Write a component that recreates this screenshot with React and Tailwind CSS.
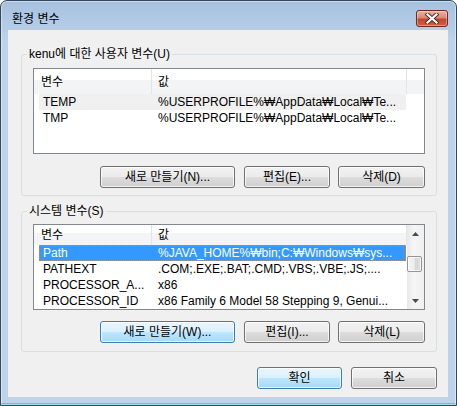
import React from "react";

const userVars = [
  { name: "TEMP", value: "%USERPROFILE%₩AppData₩Local₩Te...", hover: true },
  { name: "TMP", value: "%USERPROFILE%₩AppData₩Local₩Te..." },
];

const systemVars = [
  { name: "Path", value: "%JAVA_HOME%₩bin;C:₩Windows₩sys...", selected: true },
  { name: "PATHEXT", value: ".COM;.EXE;.BAT;.CMD;.VBS;.VBE;.JS;...." },
  { name: "PROCESSOR_A...", value: "x86" },
  { name: "PROCESSOR_ID", value: "x86 Family 6 Model 58 Stepping 9, Genui..." },
];

const Button = ({ children, width, blue }) => (
  <button
    className={
      "h-[22px] rounded-[3px] border text-[12px] leading-[14px] text-black shadow-[inset_0_0_0_1px_rgba(255,255,255,0.75)] " +
      width +
      (blue
        ? " border-[#3c7fb1] bg-[linear-gradient(#eaf6fd_0%,#d9f0fc_50%,#bee6fd_50%,#a7d9f5_100%)]"
        : " border-[#707070] bg-[linear-gradient(#f2f2f2_0%,#ebebeb_50%,#dddddd_50%,#cfcfcf_100%)]")
    }
  >
    {children}
  </button>
);

const Header = ({ full }) => (
  <div className="flex h-[25px] items-stretch bg-[linear-gradient(#ffffff_0%,#ffffff_42%,#f3f4f5_42%,#f3f4f5_100%)]">
    <div className="flex w-[117px] items-center pl-[7px]">변수</div>
    <div className="w-px bg-[#e3e4e6]" />
    <div className="flex w-[254px] items-center pl-[6px]">값</div>
    <div className="w-px bg-[#e3e4e6]" />
    {full && <div className="w-[17px]" />}
  </div>
);

const Row = ({ row }) => (
  <div
    className={
      "ml-[5px] flex h-[16px] w-[367px] shrink-0 items-center whitespace-nowrap leading-[16px] " +
      (row.selected
        ? "bg-[#3399ff] text-white outline outline-1 -outline-offset-1 outline-dotted outline-[#d98b3c]"
        : row.hover
        ? "bg-[#f0f0f0]"
        : "")
    }
  >
    <div className="w-[112px] overflow-hidden pl-[4px]">{row.name}</div>
    <div className="w-[255px] overflow-hidden pl-[7px]">{row.value}</div>
  </div>
);

const Scrollbar = () => (
  <div className="flex w-[17px] flex-col bg-[linear-gradient(90deg,#e8e8e8,#f5f5f5_40%,#f0f0f0)]">
    <div className="flex h-[17px] items-center justify-center">
      <svg width="7" height="4" viewBox="0 0 7 4">
        <path d="M3.5 0 L7 4 L0 4 Z" fill="#4a4a4a" />
      </svg>
    </div>
    <div className="flex-1 pt-[14px]">
      <div className="h-[16px] w-[15px] rounded-[2px] border border-[#959595] bg-[linear-gradient(90deg,#f6f6f6_0%,#ebebeb_50%,#d6d6d6_50%,#dedede_100%)] shadow-[inset_0_0_0_1px_rgba(255,255,255,0.7)]" />
    </div>
    <div className="flex h-[17px] items-center justify-center">
      <svg width="7" height="4" viewBox="0 0 7 4">
        <path d="M0 0 L7 0 L3.5 4 Z" fill="#4a4a4a" />
      </svg>
    </div>
  </div>
);

const Group = ({ title, rows, scroll, buttons, className, inner, gap }) => (
  <fieldset className={"w-[416px] rounded-[3px] border border-[#d5dfe5] " + className}>
    <legend className="ml-[5px] px-[2px] leading-[14px]">{title}</legend>
    <div className={"px-[11px] " + inner}>
      <div className="flex h-[86px] w-[392px] overflow-hidden border border-[#828790] bg-white">
        <div className="flex w-[373px] flex-col">
          {scroll ? (
            <Header />
          ) : (
            <div className="w-[390px]">
              <Header full />
            </div>
          )}
          {rows.map((r) => (
            <Row key={r.name} row={r} />
          ))}
        </div>
        {scroll && <Scrollbar />}
      </div>
      <div className={"flex justify-end " + gap}>
        <Button width="w-[135px]" blue={buttons[3]}>
          {buttons[0]}
        </Button>
        <div className="w-[9px]" />
        <Button width="w-[86px]">{buttons[1]}</Button>
        <div className="w-[8px]" />
        <Button width="w-[87px]">{buttons[2]}</Button>
      </div>
    </div>
  </fieldset>
);

export default function App() {
  return (
    <div className="h-[406px] w-[457px] overflow-hidden rounded-t-[7px] border border-[#34465a] bg-[linear-gradient(#a6c0dd_0px,#b6cde7_28px,#bcd3eb_40px,#bcd3eb_100%)] font-['Liberation_Sans','Noto_Sans_CJK_KR',sans-serif] text-[12px] text-black shadow-[inset_0_0_0_1px_rgba(255,255,255,0.45),inset_0_-2px_0_#5fc4e0]">
      <div className="flex h-[29px] items-start justify-between">
        <div className="pl-[11px] pt-[11px] leading-[14px]">환경 변수</div>
        <div className="mr-[8px] mt-[9px] flex h-[17px] w-[32px] items-center justify-center rounded-[3px] border border-[#6d2a22] bg-[linear-gradient(#eab0a3_0%,#d98a78_45%,#c4452b_55%,#d1603f_100%)] shadow-[inset_0_0_0_1px_rgba(255,255,255,0.35)]">
          <svg width="14" height="11" viewBox="0 0 14 11">
            <path d="M2.5 1.5 L11.5 9.5 M11.5 1.5 L2.5 9.5" stroke="#4a2a28" strokeWidth="4" strokeLinecap="square" />
            <path d="M2.5 1.5 L11.5 9.5 M11.5 1.5 L2.5 9.5" stroke="#ffffff" strokeWidth="2.2" strokeLinecap="square" />
          </svg>
        </div>
      </div>
      <div className="ml-[7px] h-[367px] w-[440px] bg-[#f0f0f0] pl-[13px] pt-[17px]">
        <Group
          title="kenu에 대한 사용자 변수(U)"
          rows={userVars}
          buttons={["새로 만들기(N)...", "편집(E)...", "삭제(D)"]}
          className=""
          inner="pt-[7px] pb-[7px]"
          gap="mt-[12px]"
        />
        <Group
          title="시스템 변수(S)"
          rows={systemVars}
          scroll
          buttons={["새로 만들기(W)...", "편집(I)...", "삭제(L)", true]}
          className="mt-[8px]"
          inner="pt-[6px] pb-[8px]"
          gap="mt-[11px]"
        />
        <div className="mt-[15px] flex w-[416px] justify-end">
          <Button width="w-[85px]" blue>
            확인
          </Button>
          <div className="w-[9px]" />
          <Button width="w-[86px]">취소</Button>
        </div>
      </div>
    </div>
  );
}
